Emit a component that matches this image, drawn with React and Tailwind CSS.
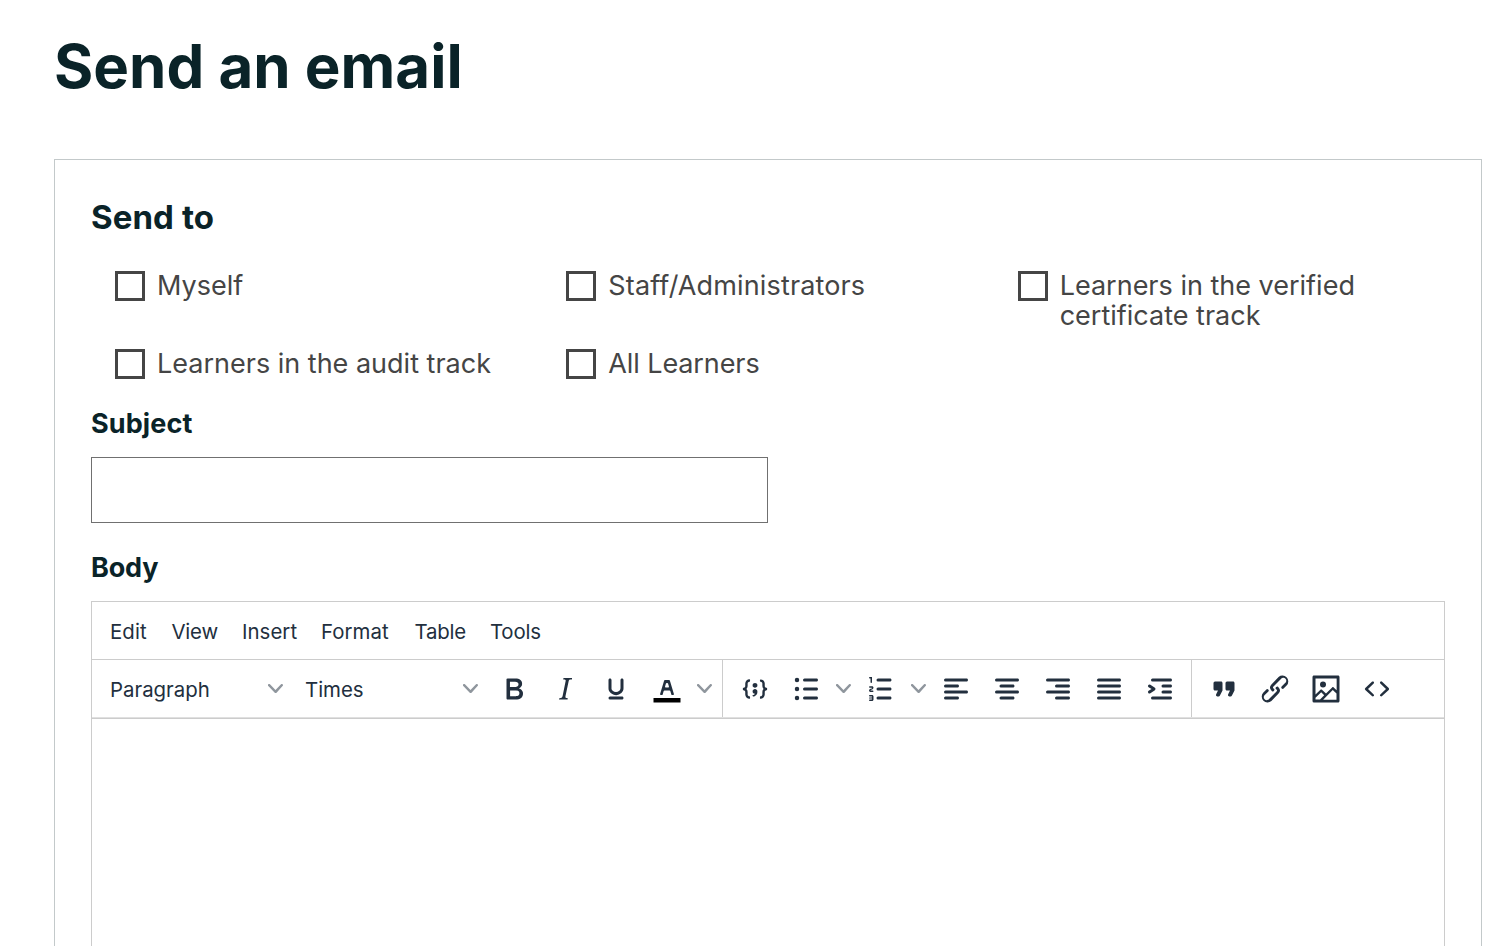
const ICONS = {
  bold: "M7.8 19c-.3 0-.5 0-.6-.2l-.2-.5V5.7c0-.2 0-.4.2-.5l.6-.2h5c1.5 0 2.7.3 3.5 1 .7.6 1.1 1.4 1.1 2.5a3 3 0 0 1-.6 1.9c-.4.6-1 1-1.6 1.2.4.1.9.3 1.3.6s.8.7 1 1.2c.4.4.5 1 .5 1.6 0 1.3-.4 2.3-1.3 3-.8.7-2.1 1-3.8 1H7.8zm5-8.3c.6 0 1.2-.1 1.6-.5.4-.3.6-.7.6-1.3 0-1.1-.8-1.7-2.3-1.7H9.3v3.5h3.4zm.5 6c.7 0 1.3-.1 1.7-.4.4-.4.6-.9.6-1.5s-.2-1-.7-1.4c-.4-.3-1-.4-2-.4H9.4v3.8h4z",
  italic: "M16.7 4.7l-.1.9h-.3c-.6 0-1 0-1.4.3-.3.3-.4.6-.5 1.1l-2.1 9.8v.6c0 .5.4.8 1.4.8h.2l-.2.8H8l.2-.8h.2c1.1 0 1.8-.5 2-1.5l2-9.8.1-.5c0-.6-.4-.8-1.4-.8h-.3l.2-.9h5.8z",
  underline: "M16 5c.6 0 1 .4 1 1v5.5a4 4 0 0 1-.4 1.8l-1 1.4a5.3 5.3 0 0 1-5.5 1 5 5 0 0 1-1.6-1c-.5-.4-.8-.9-1.1-1.4a4 4 0 0 1-.4-1.8V6c0-.6.4-1 1-1s1 .4 1 1v5.5c0 .3 0 .6.2 1l.6.7a3.3 3.3 0 0 0 2.2.8 3.4 3.4 0 0 0 2.2-.8c.3-.2.4-.5.6-.8l.2-.9V6c0-.6.4-1 1-1zM8 17h8c.6 0 1 .4 1 1s-.4 1-1 1H8a1 1 0 0 1 0-2z",
  textColor: "M8.7 16h-.8a.5.5 0 0 1-.5-.6l2.7-9c.1-.3.3-.4.5-.4h2.8c.2 0 .4.1.5.4l2.7 9a.5.5 0 0 1-.5.6h-.8a.5.5 0 0 1-.4-.4l-.7-2.2c0-.3-.3-.4-.5-.4h-3.4c-.2 0-.4.1-.5.4l-.7 2.2c0 .3-.2.4-.4.4zm2.6-7.6l-.6 2a.5.5 0 0 0 .5.6h1.6a.5.5 0 0 0 .5-.6l-.6-2c0-.3-.3-.4-.5-.4h-.4c-.2 0-.4.1-.5.4z",
  codeSample: "M7.1 10a2.8 2.8 0 0 1-.8 2 2.8 2.8 0 0 1 .8 2v1.7c0 .3.1.6.4.8.2.3.5.4.8.4.3 0 .4.2.4.4v.8c0 .2-.1.4-.4.4-.7 0-1.4-.3-2-.8-.5-.6-.8-1.3-.8-2V14c0-.3-.1-.6-.4-.8-.2-.3-.5-.4-.8-.4a.4.4 0 0 1-.4-.4v-.8c0-.2.2-.4.4-.4.3 0 .6-.1.8-.4.3-.2.4-.5.4-.8V8.300c0-.7.3-1.4.8-2 .6-.5 1.3-.8 2-.8.3 0 .4.2.4.4v.8c0 .2-.1.4-.4.4-.3 0-.6.1-.8.4-.3.2-.4.5-.4.8V10zm9.8 0V8.300c0-.3-.1-.6-.4-.8-.2-.3-.5-.4-.8-.4a.4.4 0 0 1-.4-.4V6c0-.2.1-.4.4-.4.7 0 1.4.3 2 .8.5.6.8 1.3.8 2V10c0 .3.1.6.4.8.2.3.5.4.8.4.2 0 .4.2.4.4v.8c0 .2-.2.4-.4.4-.3 0-.6.1-.8.4-.3.2-.4.5-.4.8v1.7c0 .7-.3 1.4-.8 2-.6.5-1.3.8-2 .8a.4.4 0 0 1-.4-.4v-.8c0-.2.1-.4.4-.4.3 0 .6-.1.8-.4.3-.2.4-.5.4-.8V14a2.8 2.8 0 0 1 .8-2 2.8 2.8 0 0 1-.8-2zm-3.3-.4c0 .4-.1.8-.5 1.1-.3.3-.7.5-1.1.5-.4 0-.8-.2-1.1-.5-.4-.3-.5-.7-.5-1.1 0-.5.1-.9.5-1.2.3-.3.7-.4 1.1-.4.4 0 .8.1 1.1.4.4.3.5.7.5 1.2zM12 12c.4 0 .8.1 1.1.5.4.3.5.7.5 1.1 0 1-.1 1.6-.5 2a3 3 0 0 1-1.1 1c-.4.3-.8.4-1.1.4a.5.5 0 0 1-.5-.5V16a3 3 0 0 0 1-.2l.6-.6c-.6 0-1-.2-1.3-.5-.2-.3-.3-.7-.3-1 0-.5.1-1 .5-1.2.3-.4.7-.5 1.1-.5z",
  bulletList: "M11 5h8c.6 0 1 .4 1 1s-.4 1-1 1h-8a1 1 0 0 1 0-2zm0 6h8c.6 0 1 .4 1 1s-.4 1-1 1h-8a1 1 0 0 1 0-2zm0 6h8c.6 0 1 .4 1 1s-.4 1-1 1h-8a1 1 0 0 1 0-2zM4.5 6a1.5 1.5 0 1 1 3 0 1.5 1.5 0 0 1-3 0zm0 6a1.5 1.5 0 1 1 3 0 1.5 1.5 0 0 1-3 0zm0 6a1.5 1.5 0 1 1 3 0 1.5 1.5 0 0 1-3 0z",
  numberList: "M10 17h8c.6 0 1 .4 1 1s-.4 1-1 1h-8a1 1 0 0 1 0-2zm0-6h8c.6 0 1 .4 1 1s-.4 1-1 1h-8a1 1 0 0 1 0-2zm0-6h8c.6 0 1 .4 1 1s-.4 1-1 1h-8a1 1 0 1 1 0-2zM6 4v3.5c0 .3-.2.5-.5.5a.5.5 0 0 1-.5-.5V5h-.5a.5.5 0 0 1 0-1H6zm-1 8.8l.2.2h1.3c.3 0 .5.2.5.5s-.2.5-.5.5H4.9a1 1 0 0 1-.9-1V13c0-.4.3-.8.6-1l1.2-.4.2-.3a.2.2 0 0 0-.2-.2H4.5a.5.5 0 0 1-.5-.5c0-.3.2-.5.5-.5h1.6c.5 0 .9.4.9 1v.1c0 .4-.3.8-.6 1l-1.2.4-.2.3zM7 17v2c0 .6-.4 1-1 1H4.5a.5.5 0 0 1 0-1h1.2c.2 0 .3-.1.3-.3 0-.2-.1-.3-.3-.3H4.4a.4.4 0 1 1 0-.8h1.3c.2 0 .3-.1.3-.3 0-.2-.1-.3-.3-.3H4.5a.5.5 0 1 1 0-1H6c.6 0 1 .4 1 1z",
  alignLeft: "M5 5h14c.6 0 1 .4 1 1s-.4 1-1 1H5a1 1 0 1 1 0-2zm0 4h8c.6 0 1 .4 1 1s-.4 1-1 1H5a1 1 0 1 1 0-2zm0 8h8c.6 0 1 .4 1 1s-.4 1-1 1H5a1 1 0 0 1 0-2zm0-4h14c.6 0 1 .4 1 1s-.4 1-1 1H5a1 1 0 0 1 0-2z",
  alignCenter: "M5 5h14c.6 0 1 .4 1 1s-.4 1-1 1H5a1 1 0 1 1 0-2zm3 4h8c.6 0 1 .4 1 1s-.4 1-1 1H8a1 1 0 1 1 0-2zm0 8h8c.6 0 1 .4 1 1s-.4 1-1 1H8a1 1 0 0 1 0-2zm-3-4h14c.6 0 1 .4 1 1s-.4 1-1 1H5a1 1 0 0 1 0-2z",
  alignRight: "M5 5h14c.6 0 1 .4 1 1s-.4 1-1 1H5a1 1 0 1 1 0-2zm6 4h8c.6 0 1 .4 1 1s-.4 1-1 1h-8a1 1 0 0 1 0-2zm0 8h8c.6 0 1 .4 1 1s-.4 1-1 1h-8a1 1 0 0 1 0-2zm-6-4h14c.6 0 1 .4 1 1s-.4 1-1 1H5a1 1 0 0 1 0-2z",
  alignJustify: "M5 5h14c.6 0 1 .4 1 1s-.4 1-1 1H5a1 1 0 1 1 0-2zm0 4h14c.6 0 1 .4 1 1s-.4 1-1 1H5a1 1 0 1 1 0-2zm0 4h14c.6 0 1 .4 1 1s-.4 1-1 1H5a1 1 0 0 1 0-2zm0 4h14c.6 0 1 .4 1 1s-.4 1-1 1H5a1 1 0 0 1 0-2z",
  indent: "M7 5h12c.6 0 1 .4 1 1s-.4 1-1 1H7a1 1 0 1 1 0-2zm5 12h7c.6 0 1 .4 1 1s-.4 1-1 1H7a1 1 0 0 1 0-2h5zm2-4h5c.6 0 1 .4 1 1s-.4 1-1 1h-5a1 1 0 0 1 0-2zm0-4h5c.6 0 1 .4 1 1s-.4 1-1 1h-5a1 1 0 0 1 0-2zm-7.6 3L4.4 10.8a1 1 0 0 1 1.2-1.6l3 2c.5.4.5 1.2 0 1.6l-3 2a1 1 0 0 1-1.2-1.6L6.4 12z",
  quote: "M7.5 17h.9c.4 0 .7-.2.9-.6L11 13V8c0-.6-.4-1-1-1H6a1 1 0 0 0-1 1v4c0 .6.4 1 1 1h2l-1.3 2.7a1 1 0 0 0 .8 1.3zm8 0h.9c.4 0 .7-.2.9-.6L19 13V8c0-.6-.4-1-1-1h-4a1 1 0 0 0-1 1v4c0 .6.4 1 1 1h2l-1.3 2.7a1 1 0 0 0 .8 1.3z",
  link: "M6.2 12.3a1 1 0 0 1 1.4 1.4l-2.1 2a2 2 0 1 0 2.7 2.8l4.8-4.8a1 1 0 0 0 0-1.4 1 1 0 1 1 1.4-1.3 2.9 2.9 0 0 1 0 4L9.6 20a3.9 3.9 0 0 1-5.5-5.5l2-2zm11.6-.6a1 1 0 0 1-1.4-1.4l2-2a2 2 0 1 0-2.6-2.8L11 10.3a1 1 0 0 0 0 1.4A1 1 0 1 1 9.6 13a2.9 2.9 0 0 1 0-4L14.4 4a3.9 3.9 0 0 1 5.5 5.5l-2 2z",
  image: "M5 15.7l3.3-3.2c.3-.3.7-.3 1 0L12 15l4.1-4c.3-.4.8-.4 1 0l2 1.9V5H5v10.7zM5 18V19h3l2.8-2.9-2-2L5 17.9zm14-3l-2.5-2.4-6.4 6.5H19v-4zM4 3h16c.6 0 1 .4 1 1v16c0 .6-.4 1-1 1H4a1 1 0 0 1-1-1V4c0-.6.4-1 1-1zm6 8a2 2 0 1 0 0-4 2 2 0 0 0 0 4z",
  source: "M9.8 15.7c.3.3.3.8 0 1-.3.4-.9.4-1.2 0l-4.4-4.1a.8.8 0 0 1 0-1.2l4.4-4.2c.3-.3.9-.3 1.2 0 .3.3.3.8 0 1.1L6 12l3.8 3.7zM14.2 15.7c-.3.3-.3.8 0 1 .4.4.9.4 1.2 0l4.4-4.1c.3-.3.3-.9 0-1.2l-4.4-4.2a.8.8 0 0 0-1.2 0c-.3.3-.3.8 0 1.1L18 12l-3.8 3.7z",
};

const MENUS = [
  ["Edit", "w-[61.5px] tracking-[0.1px]"],
  ["View", "w-[70.5px] tracking-[-0.2px]"],
  ["Insert", "w-[79px] tracking-[0.05px]"],
  ["Format", "w-[93.5px] tracking-[0.05px]"],
  ["Table", "w-[75.5px] tracking-[-0.2px]"],
  ["Tools", "w-[75px] tracking-[-0.2px]"],
];

function ToolButton({ name }) {
  return (
    <button type="button" aria-label={name} className="flex h-[51px] w-[51px] items-center justify-center">
      <svg viewBox="0 0 24 24" className="size-9 fill-[#222f3e]">
        {name === "textColor" && <path d="M3 18h18v3H3z" className="fill-black" />}
        <path d={ICONS[name]} fillRule="evenodd" />
      </svg>
    </button>
  );
}

function Chevron() {
  return (
    <svg viewBox="0 0 10 10" className="size-[15px] shrink-0 fill-[#222f3e] opacity-50">
      <path d="M8.7 2.2c.3-.3.8-.3 1 0 .4.4.4.9 0 1.2L5.7 7.8c-.3.3-.9.3-1.2 0L.2 3.4a.8.8 0 0 1 0-1.2c.3-.3.8-.3 1.1 0L5 6l3.7-3.8z" fillRule="evenodd" />
    </svg>
  );
}

function SplitArrow() {
  return (
    <button type="button" aria-label="More" className="flex h-[51px] w-6 items-center justify-center">
      <Chevron />
    </button>
  );
}

function Select({ label }) {
  return (
    <button type="button" className="flex h-[51px] w-[195px] items-center justify-between pr-[10px] pl-3 text-[20.4px]">
      <span className="pt-[3px]">{label}</span>
      <Chevron />
    </button>
  );
}

function Recipient({ children, tracking = "tracking-normal" }) {
  return (
    <label className="flex items-start gap-3 pr-12 pl-6">
      <span className="mt-px size-[30px] shrink-0 border-3 border-[#454545]" />
      <span className={"-mb-px pt-px text-[27px] leading-[30px] font-[380] text-[#454545] " + tracking}>{children}</span>
    </label>
  );
}

export default function App() {
  return (
    <main className="flex h-[946px] flex-col overflow-hidden bg-white pr-[30px] pl-[54px] font-['Inter',sans-serif] text-[#0a2328]">
      <h1 className="mt-[33px] text-[60px] leading-[66px] font-bold">Send an email</h1>
      <section className="mt-[60px] flex flex-1 flex-col border border-b-0 border-[#c3c9ca] px-9">
        <h2 className="mt-[39px] text-[33px] leading-9 font-bold tracking-[0.1px]">Send to</h2>
        <div className="mt-[35px] grid grid-cols-3 gap-y-[18px]">
          <Recipient>Myself</Recipient>
          <Recipient tracking="tracking-[0.14px]">Staff/Administrators</Recipient>
          <Recipient>Learners in the verified certificate track</Recipient>
          <Recipient>Learners in the audit track</Recipient>
          <Recipient tracking="tracking-[-0.1px]">All Learners</Recipient>
        </div>
        <h3 className="mt-[30px] text-[27px] leading-[30px] font-bold tracking-[0.1px]">Subject</h3>
        <input aria-label="Subject" className="mt-[18px] h-[66px] w-[677px] border border-[#707070] px-6 text-[27px]" />
        <h3 className="mt-[30px] text-[27px] leading-[30px] font-bold tracking-[-0.15px]">Body</h3>
        <div className="mt-[18px] flex flex-1 flex-col border border-b-0 border-[#ccc] text-[#222f3e]">
          <div className="flex h-[58px] items-center border-b border-[#ccc] pt-[3px] pl-[18px] text-[20.4px]">
            {MENUS.map(([label, width]) => (
              <span key={label} className={width}>{label}</span>
            ))}
          </div>
          <div className="flex h-[58px] border-b border-[#e0e0e0]">
            <div className="flex items-center border-r border-[#ccc] px-1.5">
              <Select label="Paragraph" />
              <Select label="Times" />
              <ToolButton name="bold" />
              <ToolButton name="italic" />
              <ToolButton name="underline" />
              <ToolButton name="textColor" />
              <SplitArrow />
            </div>
            <div className="flex items-center border-r border-[#ccc] px-1.5">
              <ToolButton name="codeSample" />
              <ToolButton name="bulletList" />
              <SplitArrow />
              <ToolButton name="numberList" />
              <SplitArrow />
              <ToolButton name="alignLeft" />
              <ToolButton name="alignCenter" />
              <ToolButton name="alignRight" />
              <ToolButton name="alignJustify" />
              <ToolButton name="indent" />
            </div>
            <div className="flex items-center px-1.5">
              <ToolButton name="quote" />
              <ToolButton name="link" />
              <ToolButton name="image" />
              <ToolButton name="source" />
            </div>
          </div>
          <div className="flex-1 border-t border-[#ccc]" />
        </div>
      </section>
    </main>
  );
}
